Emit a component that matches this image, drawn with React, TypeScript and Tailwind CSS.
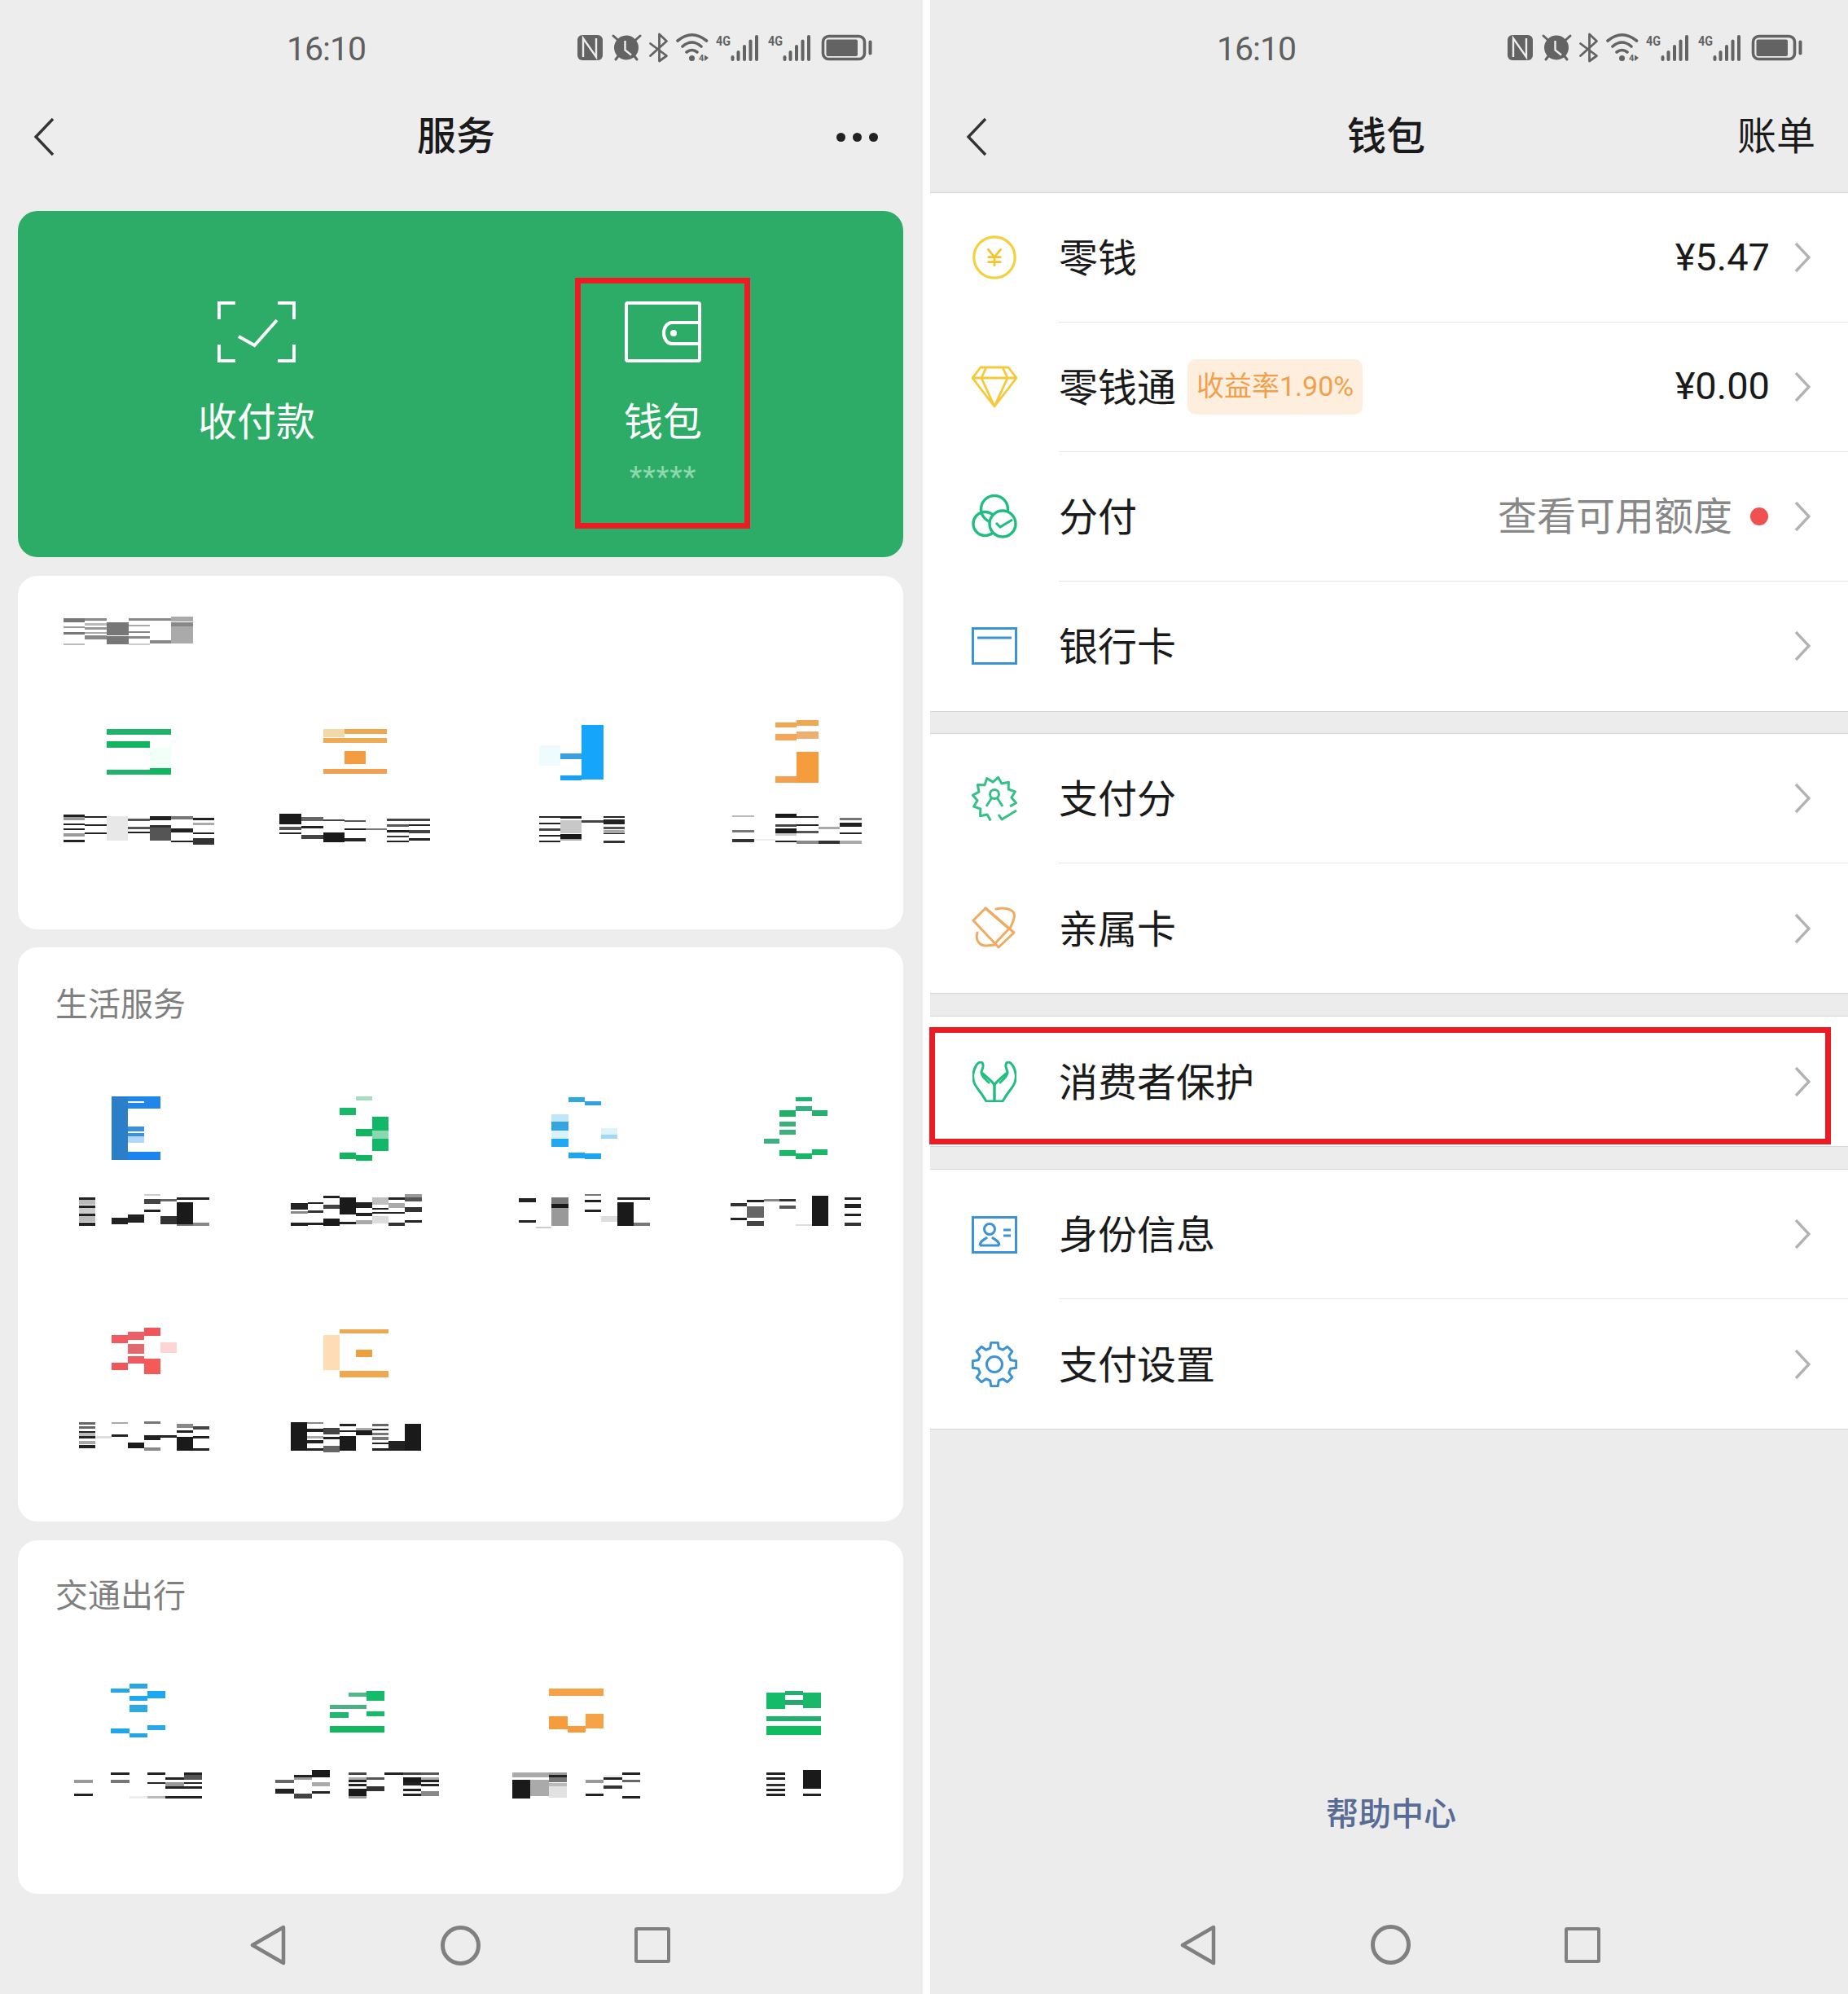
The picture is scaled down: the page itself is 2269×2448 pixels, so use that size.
import type { ReactNode } from 'react';

type Bar = [number, number, number, number, string];
type Crop = { ox: number; oy: number; sx: number; sy: number };

const K = '#1a1a1a';
const D = '#333333';
const M = '#555555';
const G = '#888888';
const L = '#aaaaaa';
const P = '#cccccc';
const F = '#e8e8e8';

const CELL = 271.75;
const TILE_H = 180;

// the blurred-out tiles are drawn in the coordinates of the mosaic they came from
const ROW_A: Crop = { ox: 60, oy: 740, sx: 1.522, sy: 3 };
const ROW_B: Crop = { ox: 60, oy: 1330, sx: 1.522, sy: 3 };
const ROW_C: Crop = { ox: 60, oy: 1610, sx: 3, sy: 3 };
const ROW_D: Crop = { ox: 60, oy: 2050, sx: 1.522, sy: 3 };

const titleBars: Bar[] = [
  [27, 67, 58, 72, '#777'], [27, 67, 87, 93, '#999'], [27, 67, 108, 118, '#777'], [27, 67, 150, 157, '#bbb'],
  [67, 108, 58, 65, '#888'], [67, 108, 75, 83, '#bbb'], [67, 108, 90, 100, '#999'], [67, 108, 108, 115, L], [67, 108, 122, 135, G],
  [108, 148, 72, 120, '#777'], [108, 148, 125, 155, '#777'],
  [148, 189, 58, 65, G], [148, 189, 80, 87, L], [148, 189, 105, 113, G], [148, 189, 125, 134, G], [148, 189, 150, 157, P],
  [189, 228, 58, 67, G], [189, 228, 138, 150, G],
  [228, 269, 50, 70, L], [228, 269, 72, 87, G], [228, 269, 87, 150, L],
];

const rowA: Bar[][] = [
  [
    [108, 228, 466, 485, '#1eb26a'], [108, 189, 510, 534, '#12b560'], [108, 189, 616, 632, '#1eb26a'], [189, 228, 608, 632, '#12b560'], [189, 228, 534, 608, '#f0fff8'],
    [27, 67, 780, 790, '#222'], [27, 67, 790, 800, '#999'], [27, 67, 812, 820, '#222'], [27, 67, 830, 836, '#222'], [27, 67, 848, 862, '#999'], [27, 67, 874, 882, '#222'],
    [67, 108, 787, 793, '#222'], [67, 108, 817, 823, '#222'], [67, 108, 847, 852, '#222'],
    [108, 148, 787, 875, F],
    [148, 189, 795, 805, M], [148, 189, 825, 835, M], [148, 189, 842, 850, '#222'],
    [189, 228, 787, 800, '#222'], [189, 228, 818, 828, D], [189, 228, 828, 875, M],
    [228, 269, 787, 797, '#777'], [228, 269, 832, 845, '#222'], [228, 269, 877, 883, '#222'],
    [269, 309, 793, 800, '#222'], [269, 309, 810, 820, L], [269, 309, 847, 852, '#222'], [269, 309, 868, 890, D],
  ],
  [
    [512, 552, 466, 495, '#f3d9a8'], [552, 632, 466, 484, '#efa84e'], [512, 632, 498, 516, '#eeaa55'], [552, 592, 545, 595, '#f49c42'], [512, 632, 612, 630, '#f0a050'],
    [431, 472, 778, 817, K], [431, 472, 825, 836, M], [431, 472, 847, 852, '#222'],
    [472, 512, 790, 805, '#666'], [472, 512, 822, 830, '#222'], [472, 512, 855, 870, '#444'],
    [512, 552, 797, 805, '#444'], [512, 552, 845, 882, K],
    [552, 592, 800, 808, M], [552, 592, 832, 838, '#222'], [552, 592, 868, 878, '#222'],
    [592, 632, 832, 836, '#777'],
    [632, 672, 795, 803, '#444'], [632, 672, 817, 825, M], [632, 672, 837, 845, '#222'], [632, 672, 857, 863, D], [632, 672, 877, 883, '#222'],
    [672, 712, 795, 803, '#444'], [672, 712, 815, 822, '#222'], [672, 712, 838, 848, '#444'], [672, 712, 868, 875, '#222'],
  ],
  [
    [995, 1036, 450, 650, '#15a5fa'], [955, 995, 555, 575, '#3aa0e0'], [955, 995, 636, 655, '#1aa0f0'], [915, 955, 525, 600, '#eefcff'],
    [915, 955, 787, 793, '#222'], [915, 955, 810, 816, '#222'], [915, 955, 832, 840, '#444'], [915, 955, 855, 860, '#222'], [915, 955, 877, 883, '#222'],
    [955, 995, 787, 795, '#222'], [955, 995, 800, 850, '#c8c8c8'], [955, 995, 852, 870, K], [955, 995, 870, 875, L],
    [995, 1036, 800, 810, '#444'],
    [1036, 1076, 787, 793, '#222'], [1036, 1076, 797, 815, '#222'], [1036, 1076, 825, 835, M], [1036, 1076, 838, 848, L], [1036, 1076, 848, 852, '#222'], [1036, 1076, 877, 885, D],
  ],
  [
    [1358, 1398, 440, 458, '#f3a550'], [1398, 1439, 432, 452, '#f0a850'], [1358, 1398, 482, 507, '#f5a555'], [1398, 1439, 475, 500, '#eeb070'], [1398, 1439, 550, 662, '#f79c3c'], [1358, 1398, 640, 662, '#f5a050'],
    [1277, 1318, 782, 790, '#bbb'], [1277, 1318, 837, 845, '#777'], [1277, 1318, 870, 882, D], [1318, 1358, 870, 875, '#eee'],
    [1358, 1398, 778, 792, K], [1358, 1398, 815, 825, '#444'], [1358, 1398, 830, 850, K], [1358, 1398, 850, 858, P], [1358, 1398, 877, 883, '#222'],
    [1398, 1439, 787, 793, '#222'], [1398, 1439, 815, 822, '#222'], [1398, 1439, 840, 850, M], [1398, 1439, 877, 887, G],
    [1439, 1479, 825, 835, L], [1439, 1479, 877, 887, D],
    [1479, 1519, 793, 800, '#777'], [1479, 1519, 810, 825, '#222'], [1479, 1519, 847, 852, '#222'], [1479, 1519, 877, 887, L],
  ],
];

const rowB: Bar[][] = [
  [
    [117, 148, 48, 282, '#2a7fc8'], [148, 209, 48, 66, '#1f86ea'], [178, 209, 66, 72, '#1f86ea'], [148, 209, 72, 92, '#1f86ea'], [148, 178, 160, 178, '#3a90e0'], [148, 178, 184, 195, '#3a90e0'], [148, 178, 195, 218, '#b0d8f5'], [148, 209, 252, 282, '#1a85ee'],
    [57, 87, 420, 430, '#222'], [57, 87, 430, 448, '#bbb'], [57, 87, 450, 458, '#222'], [57, 87, 460, 480, P], [57, 87, 480, 488, '#222'], [57, 87, 490, 510, '#bbb'], [57, 87, 512, 525, '#222'],
    [117, 148, 495, 518, '#222'], [148, 178, 483, 512, '#222'],
    [178, 209, 408, 414, P], [178, 209, 425, 443, '#444'], [178, 209, 465, 473, '#222'],
    [209, 239, 425, 435, '#666'], [209, 239, 490, 518, D],
    [239, 270, 420, 428, '#222'], [239, 270, 438, 518, K], [239, 270, 518, 525, '#777'],
    [270, 300, 420, 428, '#222'], [270, 300, 512, 525, G],
  ],
  [
    [574, 604, 48, 62, '#a8dcc0'], [543, 574, 90, 118, '#18b868'], [574, 604, 168, 195, '#12b560'], [604, 635, 122, 175, '#12b868'], [604, 635, 175, 205, '#88d8b0'], [604, 635, 205, 248, '#12b868'], [543, 574, 255, 278, '#12b560'], [574, 604, 265, 285, '#12b560'],
    [452, 483, 440, 465, '#222'], [452, 483, 470, 480, G], [452, 483, 512, 525, '#222'],
    [483, 513, 437, 443, '#222'], [483, 513, 468, 478, D], [483, 513, 512, 522, '#222'],
    [513, 543, 415, 423, '#222'], [513, 543, 448, 462, '#444'], [513, 543, 498, 525, K],
    [543, 574, 420, 483, K], [543, 574, 510, 518, '#222'],
    [574, 604, 437, 458, '#222'], [574, 604, 478, 490, '#222'], [574, 604, 505, 518, L],
    [604, 635, 420, 448, '#c0c0c0'], [604, 635, 458, 465, '#222'], [604, 635, 475, 480, '#222'], [604, 635, 490, 515, '#ddd'],
    [635, 665, 420, 428, '#222'], [635, 665, 440, 460, L], [635, 665, 473, 480, '#222'], [635, 665, 512, 525, D],
    [665, 696, 408, 420, '#999'], [665, 696, 420, 435, M], [665, 696, 455, 475, D], [665, 696, 503, 512, '#222'],
  ],
  [
    [970, 1000, 52, 70, '#30a8e0'], [1000, 1031, 65, 82, '#30a0e8'], [939, 970, 115, 140, '#c0e6f8'], [939, 970, 140, 175, '#35a5e0'], [939, 970, 175, 205, '#d8f2fc'], [939, 970, 205, 235, '#20a8f5'], [1031, 1061, 165, 190, '#dff3fb'], [1031, 1061, 190, 205, '#a0d8f0'], [970, 1000, 255, 275, '#1ea5f0'], [1000, 1031, 258, 278, '#1ea5f0'],
    [878, 909, 424, 437, '#222'], [878, 909, 503, 513, '#222'], [909, 939, 527, 533, P],
    [939, 970, 420, 443, '#777'], [939, 970, 443, 460, K], [939, 970, 460, 525, '#999'],
    [1000, 1031, 408, 415, '#777'], [1000, 1031, 428, 437, '#222'], [1000, 1031, 465, 473, '#222'], [1031, 1061, 490, 510, '#ddd'],
    [1061, 1122, 420, 430, '#222'], [1061, 1092, 438, 525, K], [1092, 1122, 512, 525, '#777'],
  ],
  [
    [1396, 1426, 50, 67, '#18b870'], [1396, 1426, 85, 103, '#35b080'], [1366, 1396, 98, 122, '#20b068'], [1426, 1456, 98, 120, '#25b070'], [1366, 1396, 140, 160, '#3cb078'], [1366, 1396, 170, 190, '#3cb078'], [1336, 1366, 205, 222, '#3cb080'], [1366, 1396, 247, 267, '#18b868'], [1396, 1426, 258, 278, '#18b868'], [1426, 1456, 243, 265, '#18b868'],
    [1274, 1305, 440, 452, D], [1274, 1305, 495, 503, '#222'],
    [1305, 1336, 430, 438, '#222'], [1305, 1336, 452, 495, '#666'], [1305, 1336, 508, 525, '#444'],
    [1336, 1366, 425, 435, G], [1366, 1396, 425, 435, D], [1366, 1396, 450, 463, M], [1396, 1426, 518, 525, '#ddd'],
    [1426, 1457, 415, 525, K],
    [1487, 1518, 420, 430, '#222'], [1487, 1518, 445, 458, '#222'], [1487, 1518, 480, 490, '#222'], [1487, 1518, 513, 525, D],
  ],
];

const rowC: Bar[][] = [
  [
    [231, 291, 88, 118, '#f05a60'], [291, 351, 75, 105, '#ee6066'], [291, 351, 120, 155, '#e06a70'], [291, 351, 165, 192, '#ee5a60'], [351, 411, 60, 90, '#f0555a'], [411, 471, 115, 152, '#fdd5d5'], [231, 291, 190, 217, '#f0555a'], [351, 411, 175, 230, '#f55a5a'],
    [111, 171, 408, 416, '#666'], [111, 171, 422, 432, '#666'], [111, 171, 440, 446, '#222'], [111, 171, 447, 458, '#bbb'], [111, 171, 458, 468, '#222'], [111, 171, 478, 490, L], [111, 171, 492, 503, '#222'],
    [171, 231, 458, 468, '#ddd'], [231, 291, 408, 415, L], [231, 291, 453, 462, '#222'],
    [291, 351, 482, 505, K], [351, 411, 404, 413, '#777'], [351, 411, 455, 475, '#222'], [351, 411, 500, 512, G],
    [411, 471, 455, 465, '#222'], [471, 531, 415, 430, G], [471, 531, 438, 447, '#222'], [471, 531, 462, 512, K],
    [531, 591, 423, 435, '#444'], [531, 591, 460, 467, '#222'], [531, 591, 505, 512, '#222'],
  ],
  [
    [1011, 1071, 88, 215, '#fedcb4'], [1071, 1251, 66, 82, '#efa84e'], [1131, 1191, 140, 168, '#eda040'], [1071, 1251, 220, 242, '#efa84e'],
    [891, 951, 408, 512, K],
    [951, 1011, 408, 414, G], [951, 1011, 433, 443, '#222'], [951, 1011, 458, 468, L], [951, 1011, 475, 485, '#222'], [951, 1011, 505, 512, '#222'],
    [1011, 1071, 430, 452, '#444'], [1011, 1071, 462, 470, '#222'], [1011, 1071, 495, 518, '#666'],
    [1071, 1131, 414, 423, '#222'], [1071, 1131, 437, 443, '#222'], [1071, 1131, 458, 512, K],
    [1131, 1191, 430, 438, L], [1131, 1191, 438, 455, K],
    [1191, 1251, 414, 422, '#666'], [1191, 1251, 432, 438, '#222'], [1191, 1251, 448, 456, '#777'], [1191, 1251, 462, 473, '#777'], [1191, 1251, 483, 488, '#222'], [1191, 1251, 505, 512, '#222'],
    [1251, 1311, 478, 512, '#222'], [1311, 1371, 414, 512, K],
  ],
];

const rowD: Bar[][] = [
  [
    [116, 150, 70, 85, '#25a8ea'], [150, 184, 50, 68, '#28a5e5'], [150, 184, 95, 115, '#1ea8f0'], [184, 218, 78, 105, '#1aa8f5'], [150, 184, 130, 155, '#30a8e0'], [116, 150, 215, 235, '#20a5e8'], [150, 184, 235, 248, '#20a5e8'], [184, 218, 205, 222, '#2aa8ea'],
    [47, 82, 405, 418, '#999'], [47, 82, 456, 464, '#222'],
    [116, 150, 378, 386, '#222'], [116, 150, 405, 418, '#777'], [150, 184, 465, 473, '#eee'],
    [184, 218, 378, 386, '#222'], [184, 218, 415, 420, '#222'], [184, 218, 465, 473, '#bbb'],
    [218, 252, 397, 405, '#222'], [218, 252, 415, 430, '#999'], [218, 252, 430, 438, '#222'], [218, 252, 465, 473, '#222'],
    [252, 286, 378, 388, '#222'], [252, 286, 388, 405, M], [252, 286, 413, 420, '#222'], [252, 286, 430, 438, '#222'], [252, 286, 465, 473, '#222'],
  ],
  [
    [559, 593, 85, 100, '#50b888'], [593, 627, 78, 115, '#14bc6a'], [524, 593, 130, 145, '#50b085'], [524, 559, 155, 178, '#20b870'], [593, 627, 152, 170, '#14bc6a'], [524, 627, 208, 230, '#10b860'],
    [422, 457, 405, 418, '#666'], [422, 457, 438, 456, '#222'],
    [457, 491, 387, 397, '#222'], [457, 491, 397, 405, '#999'], [457, 491, 456, 473, '#444'],
    [491, 525, 370, 397, K], [491, 525, 415, 430, L], [491, 525, 447, 456, '#222'],
    [559, 593, 378, 388, '#444'], [559, 593, 395, 405, L], [559, 593, 405, 413, '#222'], [559, 593, 420, 430, '#222'], [559, 593, 438, 465, K], [559, 593, 465, 473, '#999'],
    [593, 627, 395, 405, M], [593, 627, 430, 447, D], [627, 661, 378, 386, '#222'],
    [661, 695, 378, 388, '#444'], [661, 695, 397, 413, K], [661, 695, 413, 425, '#222'], [661, 695, 437, 447, '#222'], [661, 695, 456, 465, '#222'],
    [695, 729, 378, 388, M], [695, 729, 395, 405, L], [695, 729, 405, 413, '#222'], [695, 729, 420, 430, '#222'], [695, 729, 447, 465, G],
  ],
  [
    [933, 1035, 70, 95, '#f5a248'], [933, 968, 170, 218, '#f79c3c'], [968, 1002, 208, 232, '#f79c3c'], [1002, 1035, 163, 215, '#f5a248'],
    [865, 899, 378, 395, L], [865, 899, 405, 473, K], [899, 933, 378, 395, L], [899, 933, 405, 465, L],
    [933, 967, 378, 388, '#999'], [933, 967, 388, 397, '#222'], [933, 967, 397, 413, '#777'], [933, 967, 417, 428, '#bbb'], [933, 967, 428, 470, '#e2e2e2'],
    [1002, 1036, 405, 418, '#999'], [1002, 1036, 456, 464, '#222'],
    [1036, 1070, 387, 395, '#eee'], [1036, 1070, 397, 405, '#222'], [1036, 1070, 425, 438, D],
    [1070, 1104, 378, 386, '#222'], [1070, 1104, 405, 415, '#666'], [1070, 1104, 465, 473, '#222'],
  ],
  [
    [1341, 1376, 85, 145, '#14bc6a'], [1376, 1410, 78, 92, '#20b070'], [1376, 1410, 112, 130, '#25a870'], [1410, 1443, 85, 140, '#18b86a'], [1341, 1443, 172, 188, '#20b070'], [1341, 1443, 208, 240, '#10bc60'],
    [1341, 1376, 378, 386, '#222'], [1341, 1376, 397, 405, '#222'], [1341, 1376, 420, 428, D], [1341, 1376, 438, 446, '#222'], [1341, 1376, 456, 464, '#222'],
    [1410, 1443, 370, 438, K], [1410, 1443, 456, 464, '#222'],
  ],
];

function Bars({ bars }: { bars: Bar[] }) {
  return (
    <>
      {bars.map(([x0, x1, y0, y1, fill], i) => (
        <rect key={i} x={x0} y={y0} width={x1 - x0} height={y1 - y0} fill={fill} shapeRendering="crispEdges" />
      ))}
    </>
  );
}

function BlurredTile({ crop, top, col, bars }: { crop: Crop; top: number; col: number; bars: Bar[] }) {
  const left = 22 + col * CELL;
  const viewBox = `${(left - crop.ox) * crop.sx} ${(top - crop.oy) * crop.sy} ${CELL * crop.sx} ${TILE_H * crop.sy}`;
  return (
    <svg viewBox={viewBox} preserveAspectRatio="none" className="block h-[180px] w-full">
      <Bars bars={bars} />
    </svg>
  );
}

function TileRow({ crop, top, rows }: { crop: Crop; top: number; rows: Bar[][] }) {
  return (
    <div className="grid grid-cols-4">
      {rows.map((bars, i) => (
        <BlurredTile key={i} crop={crop} top={top} col={i} bars={bars} />
      ))}
    </div>
  );
}

function StatusIcons() {
  const bars = [197.5, 204.5, 212, 219.5, 227];
  const tops = [33, 27, 20, 13.5, 8];
  return (
    <svg width="375" height="50" viewBox="0 0 375 50" className="block">
      <rect x="9" y="8" width="31" height="31" rx="6" fill="#636363" />
      <path d="M16 35V12L32 35V12" fill="none" stroke="#ededed" strokeWidth="2.4" />
      <circle cx="69" cy="23.5" r="15" fill="#636363" />
      <path d="M53 9l5.5 5M86 9l-5.5 5M56 38l3-4M82 38l-3-4" stroke="#636363" strokeWidth="3" strokeLinecap="round" />
      <path d="M67.5 15v11.5l7.5 6" fill="none" stroke="#ededed" strokeWidth="2.4" />
      <path d="M98.5 18.5l20 15-9 6.5V7l9 8.500-20 18" fill="none" stroke="#636363" strokeWidth="2.8" strokeLinecap="round" strokeLinejoin="round" />
      <path d="M132 15Q149.500 0.500 167.500 15M138 22Q149.500 12 161 22M143 29Q149.500 24 156 29" fill="none" stroke="#636363" strokeWidth="3.6" strokeLinecap="round" />
      <circle cx="149.500" cy="36.500" r="3.500" fill="#636363" />
      <text x="158" y="40" fill="#636363" fontSize="11" fontWeight="700" fontFamily="Roboto, sans-serif">4</text>
      <path d="M165 32.500l5 3.500-5 4z" fill="#636363" />
      {[0, 64].map((dx) => (
        <g key={dx} fill="#636363">
          <text x={179 + dx} y="21" fontSize="17" fontWeight="700" fontFamily="Roboto, sans-serif" textLength="18" lengthAdjust="spacingAndGlyphs">4G</text>
          {bars.map((x, i) => (
            <rect key={x} x={x + dx} y={tops[i]} width="4" height={40 - tops[i]} rx="2" />
          ))}
        </g>
      ))}
      <rect x="310.500" y="9.500" width="51" height="28" rx="7" fill="none" stroke="#636363" strokeWidth="3.6" />
      <rect x="314.500" y="13.500" width="38.500" height="20.500" rx="2" fill="#636363" />
      <rect x="366.500" y="14.500" width="4" height="18" rx="2" fill="#636363" />
    </svg>
  );
}

function BackArrow() {
  return (
    <svg width="26" height="48" viewBox="0 0 26 48" className="block">
      <path d="M24 2L3 24l21 22" fill="none" stroke="#333333" strokeWidth="3.400" />
    </svg>
  );
}

function TopBars({ title, right, backPad, rightPad }: { title: string; right: ReactNode; backPad: string; rightPad: string }) {
  return (
    <>
      <div className="flex h-[120px] items-center pl-[352px]">
        <span className="w-[348px] text-[41px] leading-none tracking-[-1px] text-[#5f5f5f]">16:10</span>
        <StatusIcons />
      </div>
      <div className="grid h-[96px] grid-cols-[512px_96px_1fr] items-center">
        <div className={backPad}>
          <BackArrow />
        </div>
        <div className="text-[48px] font-medium whitespace-nowrap text-[#1a1a1a]">{title}</div>
        <div className={`flex justify-end ${rightPad}`}>{right}</div>
      </div>
    </>
  );
}

function BottomNav() {
  return (
    <div className="flex h-[123px] items-center pt-[3px] pl-[307px]">
      <svg width="44" height="50" viewBox="0 0 44 50">
        <path d="M41 3L3 25l38 22z" fill="none" stroke="#808080" strokeWidth="4.500" strokeLinejoin="round" />
      </svg>
      <div className="ml-[190px] h-[49px] w-[49px] rounded-full border-[5px] border-[#808080]" />
      <div className="ml-[189px] h-[44px] w-[44px] rounded-[3px] border-[4px] border-[#808080]" />
    </div>
  );
}

function ScanIcon() {
  return (
    <svg width="96" height="75" viewBox="0 0 96 75" className="block">
      <path d="M22 2H2v20M74 2h20v20M22 73H2V53M74 73h20V53" fill="none" stroke="white" strokeWidth="4" />
      <path d="M26 43l19.500 11L73 23" fill="none" stroke="white" strokeWidth="4" />
    </svg>
  );
}

function WalletIcon() {
  return (
    <svg width="94" height="75" viewBox="0 0 94 75" className="block">
      <rect x="2" y="2" width="90" height="71" rx="2" fill="none" stroke="white" strokeWidth="4" />
      <path d="M92 26H58a10 13 0 0 0 0 26h34" fill="none" stroke="white" strokeWidth="4" />
      <circle cx="60" cy="39" r="4" fill="white" />
    </svg>
  );
}

function Chevron() {
  return (
    <svg width="20" height="38" viewBox="0 0 20 38" className="block">
      <path d="M2 2l16 17L2 36" fill="none" stroke="#b2b2b2" strokeWidth="3.400" />
    </svg>
  );
}

function CoinIcon() {
  return (
    <svg width="60" height="60" viewBox="-2 -2 60 60" fill="none" stroke="#f5cf3c" strokeWidth="3.400">
      <circle cx="28" cy="28" r="27" />
      <path d="M19 16.500l9 11 9-11M28 27.500v12M19 27.500h18M19 34h18" stroke="#f2c531" strokeWidth="3" />
    </svg>
  );
}

function DiamondIcon() {
  return (
    <svg width="56" height="52" viewBox="0 0 56 52" fill="none" stroke="#f5c93a" strokeWidth="2.800" strokeLinejoin="round">
      <path d="M11 2h34l10 13-27 35L1 15zM1 15h54M18 2l-6 13 16 35 16-35-6-13" />
    </svg>
  );
}

function FenfuIcon() {
  return (
    <svg width="56" height="54" viewBox="0 0 56 54" fill="none" stroke="#1fbd80" strokeWidth="3.400">
      <circle cx="28" cy="18" r="16.500" />
      <circle cx="16.500" cy="36" r="14.500" />
      <circle cx="38" cy="36" r="16" fill="white" />
      <path d="M30 35l5 5 15-9" strokeWidth="3" />
    </svg>
  );
}

function BankIcon() {
  return (
    <svg width="56" height="46" viewBox="0 0 56 46" fill="none" stroke="#3a93d5" strokeWidth="3">
      <rect x="1.500" y="1.500" width="53" height="43" />
      <path d="M7 13h42" />
    </svg>
  );
}

function ScoreIcon() {
  const points = Array.from({ length: 20 }, (_, i) => {
    const a = ((100 + i * 15) * Math.PI) / 180;
    const r = i % 2 ? 21 : 27;
    return `${(28 + r * Math.cos(a)).toFixed(1)},${(28 + r * Math.sin(a)).toFixed(1)}`;
  }).join(' ');
  return (
    <svg width="56" height="56" viewBox="0 0 56 56" fill="none" stroke="#35c088" strokeWidth="3" strokeLinejoin="round">
      <polyline points={points} />
      <circle cx="28" cy="22" r="5.500" />
      <path d="M18 37l7-11M38 37l-7-11" />
      <path d="M33 47l4 6 18-11" />
    </svg>
  );
}

function FamilyCardIcon() {
  return (
    <svg width="56" height="54" viewBox="0 0 56 54" fill="none" stroke="#f0ab60" strokeWidth="3" strokeLinejoin="round" strokeLinecap="round">
      <path d="M17 2L2 17l31 33 19-18-6-5z" />
      <path d="M17 2l29 25L29 45" />
      <path d="M30 3c12-3 25 1 22 11-1 6-4 10-5 13M7 32c-3 10 3 16 11 16l11-1" />
    </svg>
  );
}

function HandsIcon() {
  const hand = 'M27 49H17C14 44 10 38 6 33 2 28 0 22 1 15 2 8 6 1 10 1c3 0 4 4 2 9-2 4-1 6 2 10l6 6M27 49V30c0-3-4-6-14-15';
  return (
    <svg width="54" height="50" viewBox="0 0 54 50" fill="none" stroke="#22bd80" strokeWidth="3" strokeLinejoin="round" strokeLinecap="round">
      <path d={hand} />
      <path d={hand} transform="matrix(-1 0 0 1 54 0)" />
    </svg>
  );
}

function IdIcon() {
  return (
    <svg width="56" height="46" viewBox="0 0 56 46" fill="none" stroke="#3a93d5" strokeWidth="3">
      <rect x="1.500" y="1.500" width="53" height="43" />
      <circle cx="22" cy="16" r="6.500" />
      <path d="M10 36c0-6 6-7 9-10M34 36c0-6-6-7-9-10M10 36h24M39 17h9M39 24h9" />
    </svg>
  );
}

function GearIcon() {
  const points = Array.from({ length: 8 }, (_, i) => {
    const a = -90 + i * 45;
    return ([[-9, 27], [9, 27], [15, 20.5], [30, 20.5]] as const)
      .map(([da, r]) => {
        const t = ((a + da) * Math.PI) / 180;
        return `${(28 + r * Math.cos(t)).toFixed(1)},${(28 + r * Math.sin(t)).toFixed(1)}`;
      })
      .join(' ');
  }).join(' ');
  return (
    <svg width="56" height="56" viewBox="0 0 56 56" fill="none" stroke="#3a93d5" strokeWidth="3" strokeLinejoin="round">
      <polygon points={points} />
      <circle cx="28" cy="28" r="9.500" />
    </svg>
  );
}

function Row({ icon, label, children, last }: { icon: ReactNode; label: ReactNode; children?: ReactNode; last?: boolean }) {
  return (
    <div className="flex h-[159px] bg-white pl-[51px]">
      <div className="flex w-[56px] items-center justify-center">{icon}</div>
      <div className={`ml-[51px] flex flex-1 items-center pr-[46px] ${last ? '' : 'border-b border-[#e6e6e6]'}`}>
        <div className="flex flex-1 items-center pt-[4px] text-[48px] text-[#1a1a1a]">{label}</div>
        {children}
        <div className="ml-[32px]">
          <Chevron />
        </div>
      </div>
    </div>
  );
}

function SectionGap() {
  return <div className="h-[29px] border-y border-[#d6d6d6] bg-[#ececec]" />;
}

function CardTitle({ children }: { children: ReactNode }) {
  return <div className="pl-[46px] text-[40px] leading-[50px] text-[#7f7f7f]">{children}</div>;
}

export default function App() {
  return (
    <div className="flex h-[2448px] w-[2269px] overflow-hidden bg-white [font-family:Roboto,'Noto_Sans_CJK_SC',sans-serif]">
      <div className="flex w-[1133px] flex-col bg-[#ededed]">
        <TopBars
          title="服务"
          backPad="pl-[41px]"
          rightPad="pr-[55px]"
          right={
            <div className="flex gap-[9px]">
              <span className="h-[11px] w-[11px] rounded-full bg-[#222]" />
              <span className="h-[11px] w-[11px] rounded-full bg-[#222]" />
              <span className="h-[11px] w-[11px] rounded-full bg-[#222]" />
            </div>
          }
        />

        <div className="flex flex-col pt-[43px] pr-[24px] pl-[22px]">
          <div className="relative flex h-[425px] rounded-[24px] bg-[#2dac68] pt-[111px] text-white">
            <div className="ml-[193px] flex w-[200px] flex-col items-center">
              <ScanIcon />
              <div className="mt-[49px] text-[48px] leading-[50px]">收付款</div>
            </div>
            <div className="ml-[299px] flex w-[200px] flex-col items-center">
              <WalletIcon />
              <div className="mt-[49px] text-[48px] leading-[50px]">钱包</div>
              <div className="mt-[26px] text-[36px] leading-[32px] tracking-[1px] text-[#8fd8ae]">*****</div>
            </div>
            <div className="absolute top-[82px] left-[684px] h-[308px] w-[215px] border-[7px] border-[#ed1c24]" />
          </div>

          <div className="mt-[23px] h-[434px] rounded-[24px] bg-white pt-[48px]">
            <svg viewBox="27 45 242 115" preserveAspectRatio="none" className="ml-[56px] block h-[38px] w-[159px]">
              <Bars bars={titleBars} />
            </svg>
            <div className="mt-[67px]">
              <TileRow crop={ROW_A} top={860} rows={rowA} />
            </div>
          </div>

          <div className="mt-[22px] h-[705px] rounded-[24px] bg-white pt-[46px]">
            <CardTitle>生活服务</CardTitle>
            <div className="mt-[71px] flex flex-col gap-[100px]">
              <TileRow crop={ROW_B} top={1330} rows={rowB} />
              <div className="grid grid-cols-4">
                {rowC.map((bars, i) => (
                  <BlurredTile key={i} crop={ROW_C} top={1610} col={i} bars={bars} />
                ))}
              </div>
            </div>
          </div>

          <div className="mt-[23px] h-[434px] rounded-[24px] bg-white pt-[44px]">
            <CardTitle>交通出行</CardTitle>
            <div className="mt-[65px]">
              <TileRow crop={ROW_D} top={2050} rows={rowD} />
            </div>
          </div>
        </div>

        <BottomNav />
      </div>

      <div className="ml-[9px] flex w-[1127px] flex-col bg-[#ececec]">
        <div className="h-[237px] border-b border-[#d6d6d6]">
          <TopBars
            title="钱包"
            backPad="pl-[44px]"
            rightPad="pr-[40px]"
            right={<span className="text-[48px] whitespace-nowrap text-[#1a1a1a]">账单</span>}
          />
        </div>

        <Row icon={<CoinIcon />} label="零钱">
          <span className="-mr-[2px] text-[47px] text-[#1a1a1a]">¥5.47</span>
        </Row>
        <Row
          icon={<DiamondIcon />}
          label={
            <>
              零钱通
              <span className="-mt-[4px] ml-[14px] flex h-[68px] items-center rounded-[10px] bg-[#fdeede] px-[11px] text-[34px] text-[#f0a04b]">收益率1.90%</span>
            </>
          }
        >
          <span className="-mr-[2px] text-[47px] text-[#1a1a1a]">¥0.00</span>
        </Row>
        <Row icon={<FenfuIcon />} label="分付">
          <span className="pt-[2px] text-[48px] text-[#888888]">查看可用额度</span>
          <span className="ml-[22px] h-[22px] w-[22px] rounded-full bg-[#f05050]" />
        </Row>
        <Row icon={<BankIcon />} label="银行卡" last />
        <SectionGap />
        <Row icon={<ScoreIcon />} label="支付分" />
        <Row icon={<FamilyCardIcon />} label="亲属卡" last />
        <SectionGap />
        <div className="relative">
          <Row icon={<HandsIcon />} label="消费者保护" last />
          <div className="absolute top-[13px] left-[-1px] h-[144px] w-[1107px] border-[7px] border-[#ed1c24]" />
        </div>
        <SectionGap />
        <Row icon={<IdIcon />} label="身份信息" />
        <Row icon={<GearIcon />} label="支付设置" last />

        <div className="h-[571px] border-t border-[#d6d6d6] pt-[448px] pl-[5px] text-center text-[40px] leading-[50px] font-medium text-[#576b95]">
          帮助中心
        </div>
        <BottomNav />
      </div>
    </div>
  );
}
